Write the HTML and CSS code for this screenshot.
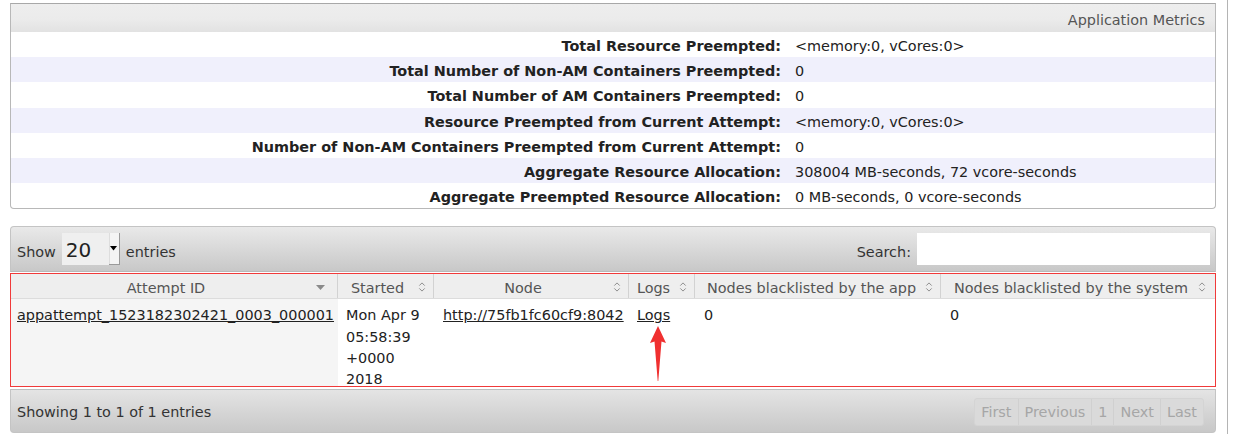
FILE: index.html
```html
<!DOCTYPE html>
<html>
<head>
<meta charset="utf-8">
<link rel="stylesheet" href="styles.css">
</head>
<body>
<div class="page">
  <div class="content">
    <div class="metrics">
      <div class="metrics-head">Application Metrics</div>
      <table class="info">
        <tr><th>Total Resource Preempted:</th><td>&lt;memory:0, vCores:0&gt;</td></tr>
        <tr class="alt"><th>Total Number of Non-AM Containers Preempted:</th><td>0</td></tr>
        <tr><th>Total Number of AM Containers Preempted:</th><td>0</td></tr>
        <tr class="alt"><th>Resource Preempted from Current Attempt:</th><td>&lt;memory:0, vCores:0&gt;</td></tr>
        <tr><th>Number of Non-AM Containers Preempted from Current Attempt:</th><td>0</td></tr>
        <tr class="alt"><th>Aggregate Resource Allocation:</th><td>308004 MB-seconds, 72 vcore-seconds</td></tr>
        <tr><th>Aggregate Preempted Resource Allocation:</th><td>0 MB-seconds, 0 vcore-seconds</td></tr>
      </table>
    </div>

    <div class="dt">
      <div class="dt-top">
        <div class="length">
          <span class="lbl">Show</span>
          <span class="select"><span class="sel-val">20</span><span class="sel-btn"><svg width="7" height="5" viewBox="0 0 7 5"><path d="M0 0H7L3.5 4.5Z" fill="#000"/></svg></span></span>
          <span class="lbl">entries</span>
        </div>
        <div class="search">
          <span class="lbl">Search:</span>
          <span class="search-input"></span>
        </div>
      </div>
      <div class="grid">
        <div class="hrow">
          <div class="hc c1">Attempt ID<svg class="sort" width="9" height="6" viewBox="0 0 9 6"><path d="M0 0H9L4.5 5Z" fill="#8a8a8a"/></svg></div>
          <div class="hc c2">Started<svg class="sort" width="8" height="12" viewBox="0 0 8 12"><path d="M1.3 4.6L4 1.9L6.7 4.6M1.3 7.4L4 10.1L6.7 7.4" fill="none" stroke="#8e8e8e" stroke-width="1"/></svg></div>
          <div class="hc c3">Node<svg class="sort" width="8" height="12" viewBox="0 0 8 12"><path d="M1.3 4.6L4 1.9L6.7 4.6M1.3 7.4L4 10.1L6.7 7.4" fill="none" stroke="#8e8e8e" stroke-width="1"/></svg></div>
          <div class="hc c4">Logs<svg class="sort" width="8" height="12" viewBox="0 0 8 12"><path d="M1.3 4.6L4 1.9L6.7 4.6M1.3 7.4L4 10.1L6.7 7.4" fill="none" stroke="#8e8e8e" stroke-width="1"/></svg></div>
          <div class="hc c5">Nodes blacklisted by the app<svg class="sort" width="8" height="12" viewBox="0 0 8 12"><path d="M1.3 4.6L4 1.9L6.7 4.6M1.3 7.4L4 10.1L6.7 7.4" fill="none" stroke="#8e8e8e" stroke-width="1"/></svg></div>
          <div class="hc c6">Nodes blacklisted by the system<svg class="sort" width="8" height="12" viewBox="0 0 8 12"><path d="M1.3 4.6L4 1.9L6.7 4.6M1.3 7.4L4 10.1L6.7 7.4" fill="none" stroke="#8e8e8e" stroke-width="1"/></svg></div>
        </div>
        <div class="brow">
          <div class="bc c1 sorted"><a href="#">appattempt_1523182302421_0003_000001</a></div>
          <div class="bc c2">Mon Apr 9<br>05:58:39<br>+0000<br>2018</div>
          <div class="bc c3"><a href="#">http://75fb1fc60cf9:8042</a></div>
          <div class="bc c4"><a href="#">Logs</a>
            <svg class="arrow" width="18" height="56" viewBox="0 0 18 56"><path d="M9 0L17 17L12.5 15.5L9.3 55H8.7L5.5 15.5L1 17Z" fill="#f03030"/></svg>
          </div>
          <div class="bc c5">0</div>
          <div class="bc c6">0</div>
        </div>
      </div>
      <div class="dt-bottom">
        <div class="info-text">Showing 1 to 1 of 1 entries</div>
        <div class="paging">
          <span class="pbtn">First</span><span class="pbtn">Previous</span><span class="pbtn">1</span><span class="pbtn">Next</span><span class="pbtn">Last</span>
        </div>
      </div>
    </div>
  </div>
  <div class="edge"></div>
</div>
</body>
</html>
```
FILE: styles.css
```css
html, body {
  margin: 0;
  padding: 0;
  background: #fff;
}
body {
  font-family: "DejaVu Sans", sans-serif;
  font-size: 14.4px;
  color: #222;
}
.page {
  display: flex;
  height: 434px;
}
.content {
  width: 1206px;
  margin-left: 10px;
  padding-top: 3px;
}
.edge {
  margin-left: 11px;
  width: 1px;
  background: #b4b4b4;
  height: 434px;
}

/* metrics box */
.metrics {
  border: 1px solid #b8b8b8;
  border-top-color: #a8a8a8;
  border-radius: 0 0 4px 4px;
  overflow: hidden;
}
.metrics-head {
  height: 28px;
  line-height: 32px;
  text-align: right;
  padding-right: 10px;
  color: #555;
  background: linear-gradient(#eeeeee 0%, #ebebeb 55%, #e2e2e2 100%);
}
.info {
  width: 100%;
  border-collapse: collapse;
}
.info tr {
  height: 25.2px;
}
.info tr.alt {
  background: #f0f0fc;
}
.info th {
  width: 770px;
  text-align: right;
  font-weight: bold;
  color: #222;
  padding: 3px 5px 0 0;
}
.info td {
  padding: 3px 0 0 9px;
  color: #222;
}

/* datatable */
.dt {
  margin-top: 17px;
}
.dt-top {
  height: 46px;
  box-sizing: border-box;
  border: 1px solid #c4c4c4;
  border-bottom: 1px solid #b8b8b8;
  border-radius: 4px 4px 0 0;
  background: linear-gradient(#e9e9e9, #c8c8c8);
  display: flex;
  align-items: center;
  justify-content: space-between;
  padding: 0 5px 0 6px;
  color: #333;
}
.length {
  display: flex;
  align-items: center;
  gap: 6px;
}
.lbl {
  position: relative;
  top: 3px;
}
.select {
  display: flex;
  height: 32px;
  width: 58px;
  background: #efefef;
}
.sel-val {
  flex: 1;
  font-size: 20px;
  line-height: 35px;
  height: 32px;
  padding-left: 4px;
  color: #222;
}
.sel-btn {
  width: 10px;
  height: 31px;
  display: flex;
  align-items: center;
  justify-content: center;
  background: #f4f4f4;
  border-right: 1px solid #9a9a9a;
  border-bottom: 1px solid #9a9a9a;
  box-shadow: inset 1px 0 0 #ddd;
}
.search {
  display: flex;
  align-items: center;
  gap: 6px;
}
.search-input {
  width: 293px;
  height: 32px;
  background: #fff;
}

.grid {
  margin-top: 1px;
  border: 1px solid #f03a3a;
  background: #fff;
}
.hrow {
  display: flex;
  height: 25px;
  background: #eeeeee;
  border-bottom: 1px solid #dcdcdc;
  box-sizing: border-box;
}
.hc {
  position: relative;
  box-sizing: border-box;
  line-height: 28px;
  text-align: center;
  color: #555;
  padding: 0 20px 0 4px;
  border-right: 1px solid #d2d2d2;
  white-space: nowrap;
}
.hc.c6 { border-right: none; padding-right: 16px; }
.hc.c5 { padding-right: 16px; }
.hc .sort {
  position: absolute;
  right: 7px;
  top: 7px;
}
.hc.c1 .sort { top: 11px; right: 12px; }
.c1 { width: 327px; }
.c2 { width: 96px; }
.c3 { width: 195px; }
.c4 { width: 66px; }
.c5 { width: 246px; }
.c6 { width: 272px; }
.brow {
  display: flex;
  height: 87px;
}
.bc {
  box-sizing: border-box;
  padding: 6px 4px 0 8px;
  line-height: 21.3px;
  color: #222;
  position: relative;
  white-space: nowrap;
}
.bc.c1 { padding-left: 6px; }
.bc.c3 { padding-left: 9px; }
.bc.c5, .bc.c6 { padding-left: 9px; }
.sorted {
  background: #f5f5f5;
}
.bc a {
  color: #222;
  text-decoration: underline;
}
.arrow {
  position: absolute;
  left: 20px;
  top: 27px;
}

.dt-bottom {
  margin-top: 2px;
  height: 44px;
  box-sizing: border-box;
  border: 1px solid #c4c4c4;
  border-top: 1px solid #bdbdbd;
  border-radius: 0 0 4px 4px;
  background: linear-gradient(#e4e4e4, #c8c8c8);
  display: flex;
  align-items: center;
  justify-content: space-between;
  padding: 2px 11px 0 6px;
  color: #333;
}
.paging {
  display: flex;
  border: 1px solid #d4d4d4;
  border-radius: 3px;
  background: #dadada;
}
.pbtn {
  height: 26px;
  line-height: 26px;
  padding: 0 6px;
  color: #a6a6a6;
  border-left: 1px solid #d0d0d0;
}
.pbtn:first-child { border-left: none; }
```
